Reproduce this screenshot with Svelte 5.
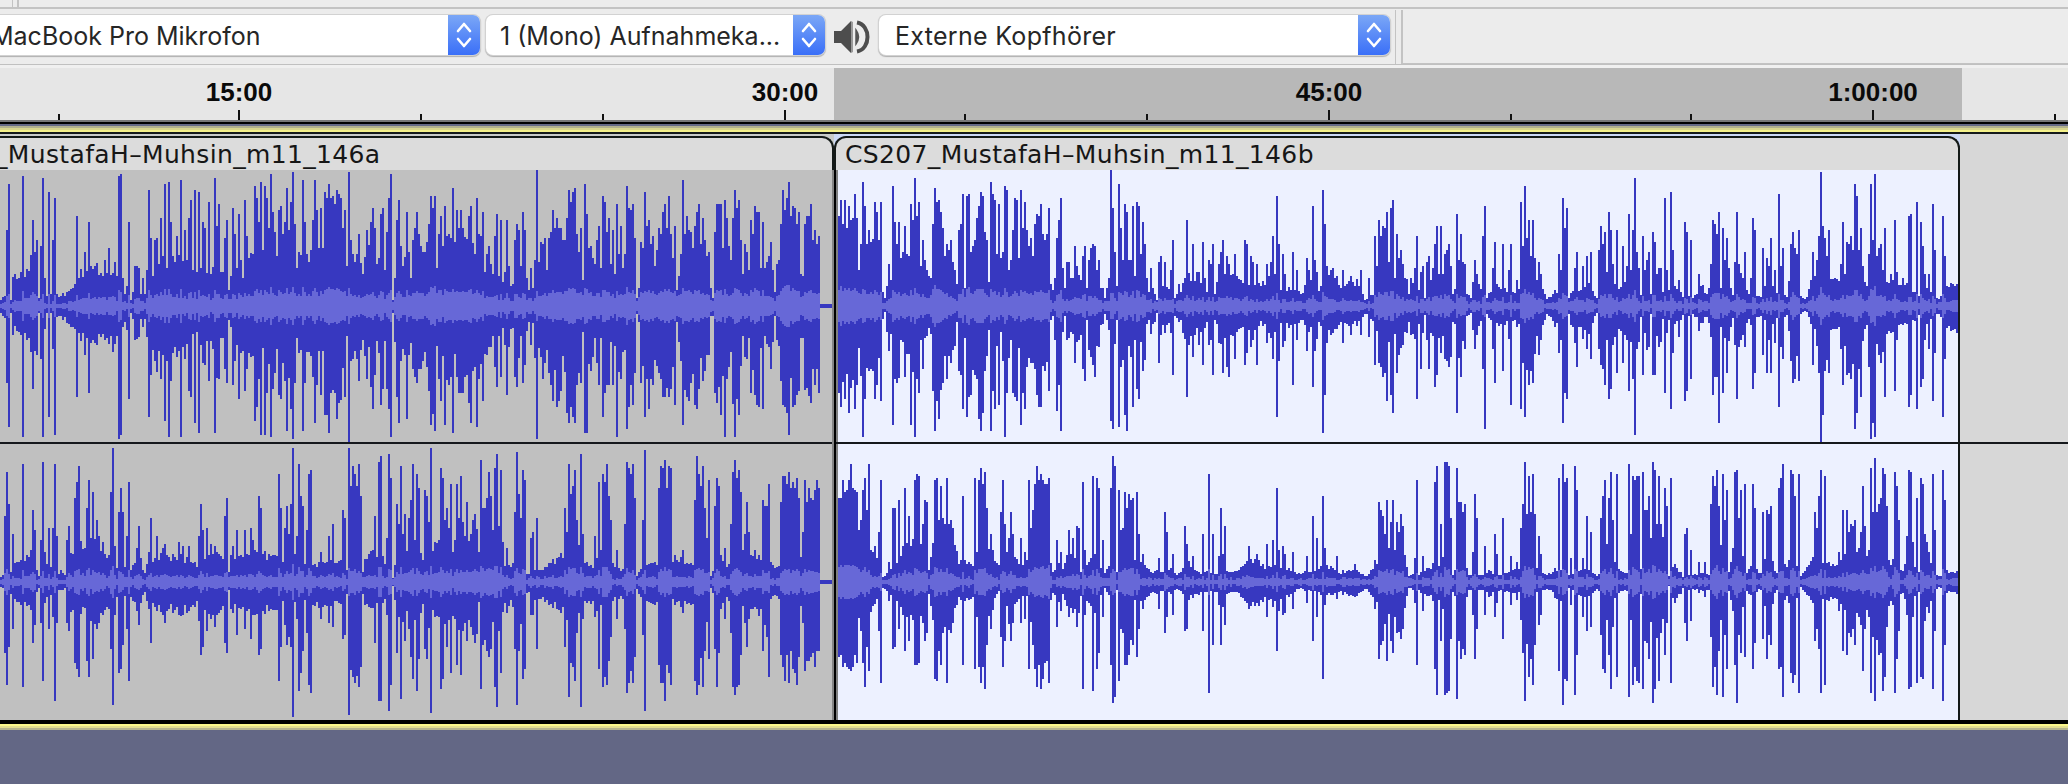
<script>
  // Peak data: each section has an origin in px, units per px, a base envelope
  // and single-column peaks, all written as "x top bottom" triples.
  const upper = [
    { from: 0, to: 420, s: 3,
      base: '0 420 462 12 400 480 30 420 460 45 370 500 60 350 520 90 305 560 110 270 585 120 400 470 145 420 450 170 405 470 195 400 480 215 380 510 240 330 540 290 320 545 345 330 545 375 380 490 395 415 460 415 320 540 425 385 480 440 330 530 470 290 600 540 300 560 600 320 560 660 330 560 760 280 590 880 250 600 960 260 600 1030 200 620 1060 290 590 1180 310 560 1260 240 640',
      peaks: '21 210 670 27 72 802 33 420 458 39 352 526 45 343 497 63 336 526 69 48 832 75 352 520 99 180 688 105 276 574 111 240 586 117 414 460 123 258 598 129 54 832 135 354 508 141 408 458 147 96 772 153 402 458 159 240 568 165 114 826 171 402 470 177 412 468 231 168 712 255 276 586 267 186 700 315 300 540 327 264 552 339 340 575 345 306 552 357 48 838 363 42 826 369 354 502 375 402 485 381 378 510 387 186 718 393 420 458 405 318 540 411 318 536 417 324 532 423 402 478 429 354 502 435 402 478 441 330 532 447 90 772 453 234 646 459 348 570 465 240 604 471 234 635 483 174 658 489 288 584 495 72 784 501 324 604 507 66 832 513 186 664 531 228 592 543 60 832 555 210 598 561 300 552 567 174 694 573 120 712 579 330 522 585 90 790 591 336 516 597 96 820 609 186 610 615 204 616 627 126 664 645 54 820 651 198 654 657 132 658 663 336 534 669 336 534 675 234 628 681 180 670 687 390 480 693 348 502 699 144 676 705 222 604 717 162 718 729 354 572 735 120 694 741 228 628 765 78 784 771 114 742 777 186 658 783 66 826 789 270 564 795 78 826 801 114 700 807 204 612 813 42 832 819 156 688 825 216 640 831 288 568 837 150 706 843 138 718 849 222 610 855 186 664 861 84 814 867 210 654 873 126 748 879 36 838 885 192 670 891 324 534 909 60 814 915 186 670 927 306 576 939 180 652 945 60 790 951 150 676 957 264 574 963 144 706 969 264 574 975 96 766 981 114 766 987 72 820 993 114 700 999 108 690 1005 132 700 1011 90 778 1017 102 730 1023 114 720 1029 204 624 1035 150 712 1041 318 528 1047 36 846 1053 240 604 1077 222 664 1089 342 540 1101 210 658 1107 256 560 1113 186 682 1119 144 748 1125 204 646 1131 312 542 1143 162 736 1149 144 688 1161 216 688 1167 114 748 1173 42 832 1179 420 458 1185 354 545 1191 180 712 1197 120 790 1203 258 604 1209 318 568 1221 156 778 1227 276 586 1233 354 550 1239 240 628 1245 204 652 1251 156 670 1257 222 628' },
    { from: 420, to: 820, s: 3,
      base: '0 260 626 20 250 620 30 200 690 60 240 650 110 235 650 160 260 620 190 300 585 240 345 540 300 330 560 340 330 550 380 260 610 430 240 640 480 250 660 520 270 615 600 290 630 700 260 660 800 250 680 860 280 590 930 270 600 1000 220 680 1060 330 560 1100 160 740 1150 300 600 1200 250 660',
      peaks: '3 258 628 15 276 576 21 246 622 33 108 796 39 144 762 45 108 814 51 324 558 57 222 658 63 168 724 69 258 588 75 138 796 87 222 676 99 84 820 105 246 582 111 150 652 117 204 700 123 150 700 129 204 700 147 168 730 153 138 790 165 282 622 171 114 802 177 222 658 183 228 612 189 156 724 195 336 582 201 282 586 207 258 560 213 312 562 219 342 528 225 228 622 231 162 682 237 348 528 243 180 652 249 366 504 255 336 556 261 180 706 267 318 562 273 378 508 279 372 504 285 240 652 291 192 682 297 210 594 303 318 528 309 156 670 315 210 616 321 354 514 327 390 486 333 324 556 339 384 490 345 300 594 351 30 838 357 306 564 363 246 592 369 252 658 375 234 610 381 330 570 387 234 640 393 216 676 399 150 724 405 204 630 411 174 742 417 204 724 423 204 694 429 240 588 435 240 636 441 174 760 447 90 790 453 126 742 459 96 772 465 84 790 471 222 676 477 276 640 483 204 670 489 360 516 495 72 820 501 162 820 507 264 612 525 312 534 531 240 610 537 198 676 543 324 534 549 108 772 555 126 700 561 216 676 567 174 676 573 312 546 579 210 676 585 342 558 591 132 832 597 282 636 603 198 658 609 324 576 615 282 570 621 78 808 627 144 742 633 150 676 639 132 736 645 234 640 651 414 462 657 384 486 663 246 670 669 264 618 675 96 772 681 198 658 687 180 748 693 252 658 699 228 676 705 318 600 711 270 618 717 204 640 723 222 658 729 156 712 735 132 712 741 204 684 747 108 712 753 222 688 759 294 622 765 198 736 771 390 486 777 348 546 783 282 604 789 60 796 795 222 690 801 168 712 807 210 724 813 216 668 819 264 642 825 198 736 831 156 748 837 132 688 843 252 594 849 174 664 855 240 634 861 288 586 867 276 586 873 384 468 879 414 468 885 216 700 891 132 730 897 132 682 903 132 766 909 264 648 915 120 832 921 174 658 927 258 622 933 300 576 939 174 732 945 90 832 951 144 718 957 120 766 963 240 618 969 342 528 975 252 592 981 276 598 987 330 534 993 180 700 999 222 630 1005 138 706 1011 156 736 1017 156 742 1023 324 564 1029 186 748 1035 324 528 1041 306 552 1047 288 562 1053 246 628 1059 330 546 1065 396 468 1071 312 540 1077 300 558 1083 192 664 1089 90 736 1095 150 742 1101 114 760 1107 66 826 1113 168 654 1119 138 742 1125 144 736 1131 192 706 1137 156 694 1143 342 534 1149 348 534 1155 192 690 1161 168 684 1167 168 708 1173 132 730 1179 240 628 1185 210 676 1191 252 628 1197 228 700' },
    { from: 838, to: 1240, ox: 830, s: 3,
      base: '24 190 700 50 200 690 80 230 670 120 235 635 155 260 620 160 410 458 180 340 530 190 220 650 240 290 580 290 310 540 310 180 690 350 270 600 380 360 530 400 230 660 440 200 680 470 260 640 540 300 600 600 240 610 655 220 640 665 390 470 690 300 620 705 380 500 720 350 520 780 340 560 810 380 500 835 400 480 860 300 580 900 300 600 940 270 600 960 380 490 990 350 520 1030 400 480 1070 345 550 1150 370 510 1200 330 540 1260 345 510',
      peaks: '27 168 700 33 120 742 39 192 666 45 120 718 51 204 642 57 138 760 63 180 684 69 174 660 75 102 748 81 174 676 87 330 564 93 252 648 99 66 832 105 138 718 117 210 634 123 246 628 135 126 718 141 156 676 147 240 594 153 126 724 159 396 478 165 414 456 171 378 516 177 312 574 183 360 522 189 78 796 195 186 658 201 252 670 207 186 654 213 294 540 219 276 546 225 198 652 231 282 582 237 288 582 243 132 796 249 180 636 255 54 832 261 168 658 267 126 700 273 318 540 279 240 628 285 300 534 297 348 504 303 354 522 309 192 694 315 84 814 321 126 724 327 120 778 333 156 690 339 204 670 345 288 588 351 252 658 357 270 588 363 240 610 369 306 570 375 330 558 381 372 486 387 210 634 393 192 646 399 102 748 405 384 534 411 108 772 417 102 712 423 276 706 429 258 630 435 240 646 441 174 658 447 138 778 453 96 814 459 108 760 465 216 634 471 240 588 477 366 510 483 66 814 489 102 694 495 120 748 501 282 558 507 132 736 513 294 516 519 276 604 525 78 832 531 90 700 537 330 594 543 300 540 549 210 700 555 114 712 561 120 724 567 294 564 573 90 796 579 204 700 585 126 748 591 210 622 597 258 594 603 234 610 609 288 610 615 192 628 621 162 706 627 168 742 633 132 742 639 222 618 645 240 634 651 222 606 657 144 694 663 372 480 669 390 468 675 354 540 681 234 754 687 180 676 693 114 814 699 324 516 705 384 468 711 306 540 717 306 534 735 258 610 741 318 546 759 288 628 765 258 664 771 384 480 777 300 570 783 264 592 789 252 616 795 258 652 801 330 558 807 300 560 819 384 492 825 414 462 831 384 480 837 354 510 843 30 784 849 144 808 855 276 552 861 378 480 867 72 802 873 204 622 879 300 600 885 132 766 891 156 814 897 300 558 903 300 592 909 138 742 915 348 540 921 126 688 927 138 718 933 282 546 939 186 634 945 252 600 951 354 492 957 396 480 963 324 522 969 384 492 975 402 486 981 420 458 987 306 610 993 288 526 1005 306 520 1023 330 520 1029 240 646 1035 414 468 1041 402 474 1047 372 486 1053 396 480 1071 180 712 1089 252 592 1101 336 504 1107 336 556 1119 246 616 1125 354 504 1131 396 486 1137 300 556 1143 312 540 1149 252 646 1155 402 480 1161 366 492 1167 312 550 1173 276 552 1179 240 640 1185 342 534 1191 288 622 1197 312 652 1215 282 598 1245 240 616 1251 252 580' },
    { from: 1240, to: 1640, s: 3,
      base: '0 350 510 40 375 520 60 370 490 100 340 530 125 390 490 150 385 500 190 400 480 205 330 520 240 390 490 260 320 530 300 370 500 350 360 495 375 415 465 400 405 480 410 290 600 450 280 590 495 350 520 530 380 520 560 360 510 620 290 590 640 400 480 675 310 560 682 410 460 710 370 500 740 408 465 770 380 500 820 390 490 835 400 480 850 240 630 890 320 560 920 415 465 950 390 500 990 390 510 1050 370 520 1070 415 455 1090 290 600 1130 390 510 1170 330 560 1210 400 500 1260 320 550',
      peaks: '15 240 616 21 252 580 33 288 562 39 306 540 51 312 616 81 312 550 93 306 534 99 228 598 105 342 516 111 108 772 117 252 604 129 282 562 135 342 544 159 276 676 171 330 540 201 294 574 207 330 516 219 138 682 225 300 574 231 336 538 249 90 820 255 192 706 261 318 550 279 324 520 291 348 508 309 330 550 333 348 526 363 330 526 387 354 532 405 228 616 411 318 514 417 180 610 423 228 622 429 198 652 435 204 640 441 156 724 447 306 546 453 144 706 459 120 760 465 354 522 471 222 640 477 294 586 483 270 564 489 312 556 507 402 486 513 354 526 525 324 538 531 228 718 537 390 492 543 336 628 549 318 520 555 414 466 561 306 540 567 288 628 573 360 520 579 324 528 585 252 682 591 198 646 597 342 534 603 198 580 609 342 528 615 282 598 621 270 604 627 252 622 633 318 592 639 402 486 651 162 760 657 300 594 663 222 652 669 306 544 675 312 568 687 404 466 693 414 458 699 366 510 705 300 568 711 342 526 729 228 628 735 138 808 759 324 568 765 246 670 771 372 490 789 252 634 807 330 538 813 252 736 831 360 502 843 126 748 849 258 610 855 78 772 861 234 630 867 180 676 873 288 634 879 180 670 885 294 582 891 360 528 897 306 586 903 342 540 957 282 580 963 330 540 969 114 790 975 204 700 981 144 718 987 414 462 1005 324 550 1011 276 622 1029 318 538 1041 288 568 1053 276 598 1077 270 568 1083 198 616 1089 252 628 1095 216 676 1101 336 540 1107 156 718 1113 210 688 1119 312 556 1131 210 640 1149 258 610 1161 318 540 1167 162 694 1173 330 546 1179 210 658 1185 54 826 1191 276 568 1197 324 546 1203 420 456 1209 228 646 1221 300 568 1227 276 562 1239 216 646 1245 246 646' },
    { from: 1640, to: 1958, s: 3,
      base: '0 420 456 10 350 520 30 400 480 45 320 550 65 390 480 105 380 490 125 402 475 160 412 465 185 375 490 205 408 465 215 290 590 250 340 560 270 370 520 280 410 470 300 340 540 325 400 480 360 410 470 380 370 500 410 390 480 440 410 465 460 290 590 480 410 460 500 415 455 510 360 490 540 260 600 580 365 500 600 340 520 640 280 600 680 370 500 700 260 660 740 350 540 760 355 520 800 370 490 820 400 480 845 345 540 870 390 480 895 420 460 930 360 520 960 380 515',
      peaks: '9 228 646 15 330 520 21 300 570 27 276 562 33 402 462 39 216 646 45 246 646 51 342 528 57 324 562 63 324 546 75 114 700 81 330 520 93 96 748 99 270 580 117 360 532 135 186 724 141 216 694 153 240 658 177 342 514 213 312 532 219 180 706 225 192 652 231 222 652 237 156 790 243 384 502 249 204 700 255 300 534 261 234 640 267 324 544 285 306 556 291 156 718 297 312 562 315 276 562 333 354 496 339 174 688 345 210 640 369 264 586 375 378 480 381 294 640 387 318 540 393 234 640 405 330 550 417 102 742 423 318 562 429 264 598 453 252 604 459 216 670 465 264 658 471 282 588 477 210 664 519 276 616 525 348 506 537 228 640 543 36 846 549 198 766 555 234 634 561 288 600 567 210 640 603 312 568 609 186 676 615 342 558 621 246 646 627 252 640 633 228 658 639 270 612 645 72 808 651 108 760 657 270 628 663 204 712 669 318 544 687 282 622 693 72 838 699 240 790 705 42 832 711 288 552 717 264 586 723 252 610 729 330 576 735 204 712 753 342 520 765 180 694 771 336 540 789 354 496 807 168 742 813 162 706 819 396 480 831 126 748 837 408 466 843 186 682 849 258 658 855 342 540 867 342 568 879 132 724 885 270 580 909 168 772 915 288 598' }
  ];

  const lower = [
    { from: 0, to: 510, s: 3,
      base: '0 408 442 12 395 450 40 375 470 60 365 490 90 330 510 115 407 443 135 360 480 170 390 460 178 400 450 196 398 450 205 335 530 250 300 520 290 300 550 320 345 510 340 350 500 370 365 480 395 385 475 415 350 500 432 400 455 450 350 505 500 345 510 550 350 520 590 375 490 640 345 520 700 350 500 760 340 515 820 340 515 850 340 520 880 300 560 920 370 500 960 370 500 1020 360 490 1040 385 470 1085 370 490 1120 335 500 1180 380 480 1210 300 540 1260 330 530 1320 300 530 1400 300 540 1440 250 600 1500 280 570 1515 370 500 1540 390 480',
      peaks: '15 228 640 21 96 736 27 192 622 33 396 462 39 282 568 69 72 742 99 210 610 105 270 556 117 408 444 123 300 550 129 66 724 135 336 490 147 264 568 159 264 532 165 72 784 171 288 550 177 402 450 183 390 450 201 300 550 207 258 574 225 174 670 231 126 688 237 78 712 261 204 664 267 120 712 279 156 658 291 240 568 297 288 550 309 306 526 333 156 628 339 24 796 345 318 526 351 384 470 357 216 700 363 144 688 369 216 616 381 288 568 387 126 724 393 390 470 411 324 514 417 258 556 423 354 490 447 336 508 453 234 610 471 288 514 489 324 526 495 312 550 537 306 526 549 318 526 567 318 514 597 288 544 603 192 646 609 270 622 621 264 574 633 312 538 645 318 562 675 228 610 681 174 640 687 396 450 699 318 520 711 270 586 735 270 568 753 264 598 759 300 526 777 168 646 783 204 628 837 102 724 843 204 622 849 366 484 855 264 556 861 198 616 867 282 592 873 192 622 879 24 832 885 342 486 891 288 538 897 72 754 903 168 700 909 198 634 915 372 480 921 270 580 927 102 736 933 90 760 963 336 538 987 288 550 999 252 562 1029 210 598 1035 234 586 1041 390 462 1047 24 826 1053 138 690 1059 78 712 1065 102 730 1071 138 708 1077 72 742 1083 168 682 1089 396 462 1125 228 610 1137 66 784 1143 48 784 1149 348 488 1161 294 526 1167 42 814 1173 114 736 1179 414 438 1191 192 640 1197 252 532 1203 78 778 1209 282 546 1215 222 604 1227 234 568 1233 180 652 1239 72 718 1245 300 540 1251 102 754 1257 144 658 1269 360 492 1275 150 628 1281 168 658 1287 246 564 1293 24 820 1323 84 748 1329 114 718 1335 240 552 1341 204 622 1347 264 540 1353 132 700 1359 336 528 1371 132 676 1377 234 570 1383 108 706 1389 246 574 1401 186 604 1419 240 586 1425 222 610 1437 336 486 1443 60 748 1449 204 616 1455 204 600 1461 174 634 1467 96 652 1473 168 628 1479 270 546 1485 84 742 1491 42 802 1497 258 574 1503 90 700 1509 306 516 1521 324 520 1533 318 526 1545 216 628 1551 36 796' },
    { from: 510, to: 1020, s: 3,
      base: '0 395 460 14 350 530 50 400 460 75 390 480 105 380 485 145 350 510 162 345 510 170 280 540 210 290 540 222 355 495 235 378 480 255 375 500 270 330 520 280 280 600 305 370 480 340 385 480 378 405 450 400 370 490 440 370 490 490 350 490 550 370 500 590 350 530 603 408 445 625 340 510 655 375 480 700 330 500 750 345 530 785 370 470 808 375 480 870 330 520 930 350 500 984 170 650 1040 200 650 1080 330 510 1103 350 480 1115 410 445 1140 390 460 1160 360 490 1190 300 540 1240 310 530 1255 400 450 1270 300 550 1330 290 520 1345 360 480 1390 370 480 1410 300 580 1450 340 500 1465 375 450 1500 300 530 1530 370 480 1560 370 480',
      peaks: '15 216 628 21 36 796 27 162 634 33 234 552 39 90 718 45 120 688 63 294 526 69 276 526 81 234 628 165 204 622 171 276 540 177 72 772 183 162 670 189 138 682 195 90 724 201 240 580 213 42 802 219 282 538 255 288 532 267 126 688 273 330 496 279 102 742 285 126 712 291 72 736 297 168 664 303 240 592 321 330 538 345 252 568 351 66 760 357 84 730 363 102 694 369 72 730 375 174 652 381 408 446 399 240 586 405 30 814 447 144 676 453 78 730 459 84 730 465 60 784 471 144 676 477 78 700 483 84 736 519 330 520 555 180 724 561 48 766 567 102 736 573 138 654 579 78 742 585 204 634 591 294 546 597 120 658 603 408 444 615 198 628 621 114 742 627 138 640 645 324 538 663 252 580 669 96 742 675 60 766 681 114 742 687 90 736 693 156 646 705 282 550 711 186 622 717 276 538 735 330 502 759 180 634 765 198 556 771 198 592 777 132 712 813 186 646 819 108 682 825 108 724 831 132 646 837 96 730 843 144 634 849 126 688 855 144 700 861 114 736 867 174 652 879 276 550 885 120 694 891 186 664 897 144 664 903 174 652 909 180 640 915 150 682 921 120 634 927 144 634 987 174 652 993 174 646 999 120 682 1005 156 670 1011 150 682 1017 120 688 1023 72 694 1029 144 682 1035 150 646 1041 156 670 1047 270 534 1053 240 574 1059 150 670 1065 114 742 1071 210 622 1077 72 694 1083 330 516 1095 318 492 1107 276 574 1113 120 730 1137 366 484 1149 204 628 1155 204 622 1167 180 568 1185 144 634 1197 228 604 1215 120 676 1221 102 676 1227 108 670 1239 252 550 1245 180 604 1251 186 580 1275 120 718 1281 114 724 1287 240 634 1293 138 676 1299 234 580 1305 252 562 1311 114 730 1317 252 570 1323 240 580 1329 264 550 1359 168 676 1395 114 688 1407 120 682 1413 84 730 1419 132 682 1425 96 748 1431 204 616 1443 282 568 1473 216 592 1479 120 682 1485 252 604 1497 294 552 1503 216 604 1509 282 550 1533 294 550 1545 342 538 1557 120 688' },
    { from: 1020, to: 1530, s: 3,
      base: '0 380 470 20 370 460 30 250 560 88 250 600 95 405 445 110 370 490 130 380 470 150 330 510 170 370 500 185 395 470 210 345 510 240 370 480 250 408 435 270 370 470 290 380 470 310 265 580 340 200 600 355 350 500 385 390 465 420 390 460 450 385 460 475 402 450 500 360 480 540 400 460 560 390 460 590 400 460 650 390 460 690 345 510 740 380 480 790 380 480 840 402 445 880 385 460 920 375 465 960 395 460 1000 388 470 1040 405 450 1070 378 480 1090 260 580 1150 310 540 1165 405 445 1210 395 460 1240 370 480 1270 340 520 1300 408 450 1330 300 560 1345 405 450 1375 408 446 1410 390 470 1440 405 450 1480 385 465 1500 380 460 1520 230 580 1560 340 500',
      peaks: '3 294 550 15 336 538 27 120 688 33 264 546 39 210 616 45 132 688 51 78 742 57 120 676 63 102 748 69 120 718 75 132 670 81 132 664 87 114 730 111 300 562 123 336 514 147 270 532 159 294 520 171 258 562 177 264 520 189 126 748 195 330 526 219 108 754 225 342 520 231 114 688 237 144 640 249 300 532 273 144 676 279 48 790 285 78 772 291 396 450 297 150 724 303 270 568 309 264 580 315 156 676 321 204 676 327 162 646 333 180 600 339 174 616 345 360 480 351 156 652 357 282 568 369 342 508 417 354 508 435 216 580 441 276 532 459 342 526 495 258 574 501 312 568 519 348 474 549 282 574 567 102 760 579 282 616 597 348 496 603 204 616 609 342 500 615 258 556 687 318 508 711 342 490 741 312 532 759 300 502 771 144 634 777 330 514 789 318 526 795 342 520 819 336 508 861 348 490 879 228 604 891 294 532 909 168 718 915 324 496 951 348 478 1005 372 472 1065 360 508 1077 186 658 1083 210 616 1089 228 604 1095 282 552 1101 180 664 1107 324 522 1113 246 604 1119 180 640 1125 330 532 1131 246 580 1137 276 576 1143 222 598 1149 258 568 1187 354 490 1191 120 676 1209 348 514 1245 126 688 1251 78 766 1257 378 480 1263 252 604 1275 66 766 1281 66 760 1287 78 754 1293 234 598 1311 84 778 1317 186 604 1323 186 658 1329 216 628 1335 192 646 1359 336 526 1365 162 658 1371 234 568 1395 318 526 1425 282 532 1431 342 490 1449 234 598 1473 348 496 1491 366 480 1503 264 540 1509 192 640 1515 66 784 1521 222 612 1527 108 712 1533 216 658 1539 102 736 1545 222 616 1557 288 556' },
    { from: 1530, to: 1958, s: 2.9145,
      base: '0 250 620 15 378 460 45 402 450 70 390 460 82 385 500 110 408 440 150 380 480 200 405 450 215 300 560 245 370 470 285 402 450 300 290 560 320 400 450 345 260 580 385 250 570 405 405 440 420 370 490 445 405 450 500 400 450 525 405 450 545 260 600 580 400 450 600 270 560 630 405 450 650 360 480 670 407 440 695 300 560 715 400 450 770 350 500 790 410 440 820 350 490 870 370 480 890 380 470 920 320 530 990 330 530 1040 280 580 1050 380 480 1070 310 530 1085 405 450 1105 310 530 1130 400 450 1160 340 510 1180 400 450 1195 410 440 1210 390 460 1250 395 460',
      peaks: '3 216 658 9 102 736 14 222 616 26 288 556 32 342 526 85 114 694 96 72 796 102 126 718 108 114 724 120 354 496 131 78 766 137 150 646 155 354 532 166 228 574 178 276 562 207 234 586 213 168 688 219 120 700 231 174 646 236 96 748 242 240 562 254 102 712 289 72 772 295 282 540 300 108 736 306 120 682 312 108 724 318 108 730 329 96 748 335 210 604 341 210 610 347 168 658 359 66 790 364 90 748 370 252 594 376 108 724 382 252 580 394 144 646 399 198 550 411 114 730 452 282 550 458 264 604 469 330 544 492 366 458 510 366 472 528 192 592 534 108 742 539 138 682 545 90 766 551 198 634 563 102 772 568 240 586 574 150 688 598 96 676 603 90 790 609 234 586 615 150 640 622 348 500 627 132 652 650 132 688 656 204 610 679 216 598 691 210 658 697 222 586 702 198 616 726 144 688 732 114 682 738 72 772 761 90 700 767 102 730 773 168 706 784 102 760 831 216 604 837 264 568 842 168 628 848 90 760 860 108 736 900 336 514 912 210 634 924 210 646 930 276 580 936 252 592 942 258 568 947 240 616 965 276 556 970 138 694 976 258 568 994 84 760 1000 216 592 1006 54 784 1012 216 600 1018 192 646 1023 174 640 1029 84 754 1035 102 712 1041 198 562 1064 96 760 1070 138 658 1076 240 574 1099 288 526 1105 90 748 1110 96 742 1117 306 532 1128 174 730 1140 114 712 1145 132 718 1151 282 544 1157 306 500 1163 336 520 1175 102 748 1181 270 574 1204 90 784 1209 180 616' }
  ];

  const triples = (str) => {
    const n = str.split(' ').map(Number);
    const out = [];
    for (let i = 0; i + 2 < n.length; i += 3) out.push([n[i], n[i + 1], n[i + 2]]);
    return out;
  };
  const noise = (i) => {
    const v = Math.sin(i * 12.9898) * 43758.5453;
    return v - Math.floor(v) - 0.5;
  };

  function build(sections, zero, cy) {
    const cols = [];
    for (const sec of sections) {
      const ox = sec.ox ?? sec.from;
      const base = triples(sec.base);
      const peaks = new Map(triples(sec.peaks).map(([x, t, b]) => [Math.round((ox + x / sec.s - 1) / 2), [t, b]]));
      let k = 0;
      for (let x = sec.from; x < sec.to; x += 2) {
        const u = (x + 1 - ox) * sec.s;
        while (k < base.length - 2 && base[k + 1][0] <= u) k++;
        const [x0, t0, b0] = base[k];
        const [x1, t1, b1] = base[k + 1];
        const f = Math.max(0, Math.min(1, (u - x0) / (x1 - x0)));
        const up = zero - (t0 + (t1 - t0) * f);
        const dn = b0 + (b1 - b0) * f - zero;
        const p = peaks.get(x / 2);
        const j = 0.94 + noise(x) * 0.34;
        const U = p ? zero - p[0] : up * j;
        const D = p ? p[1] - zero : dn * j;
        const r = Math.min(3 + (up + dn) * 0.05 + (U + D) * 0.042 + noise(x + 7) * 10, Math.min(U, D) * 0.65);
        cols.push([x, U / 3, D / 3, Math.max(r, 6) / 3]);
      }
    }
    const path = (a, b, up, dn) =>
      cols.filter((c) => c[0] >= a && c[0] < b)
        .map((c) => {
          const t = Math.round(cy - up(c));
          const e = Math.round(cy + dn(c));
          return `M${c[0]} ${t}h2V${e}h-2z`;
        }).join('');
    return (a, b) => ({
      peak: path(a, b, (c) => c[1], (c) => c[2]),
      rms: path(a, b, (c) => c[3], (c) => c[3])
    });
  }
  const waveU = build(upper, 438, 306);
  const waveL = build(lower, 426, 582);

  const clips = [
    { id: 'a', title: '_MustafaH–Muhsin_m11_146a', x: 0, w: 832, u: waveU(0, 820), l: waveL(0, 820), tail: true },
    { id: 'b', title: 'CS207_MustafaH–Muhsin_m11_146b', x: 838, w: 1120, u: waveU(838, 1958), l: waveL(838, 1958), tail: false }
  ];
  const ticks = [
    [59, ''], [239, '15:00'], [421, ''], [603, ''], [785, '30:00'], [965, ''], [1147, ''],
    [1329, '45:00'], [1511, ''], [1691, ''], [1873, '1:00:00'], [2055, '']
  ];
</script>

{#snippet arrows()}
  <span class="arrows">
    <svg width="32" height="40" viewBox="0 0 32 40">
      <path d="M10 16l6-7 6 7M10 24l6 7 6-7" fill="none" stroke="#fff" stroke-width="2.6" stroke-linecap="round" stroke-linejoin="round" />
    </svg>
  </span>
{/snippet}

<main>
  <div class="strip"><i></i><b></b></div>
  <div class="toolbar">
    <div class="select mic"><span>MacBook Pro Mikrofon</span>{@render arrows()}</div>
    <div class="select chan"><span>1 (Mono) Aufnahmeka...</span>{@render arrows()}</div>
    <svg class="speaker" width="38" height="36" viewBox="0 0 38 36">
      <path d="M1 12h7L18 2v32L8 24H1z" fill="#4d4d4d" />
      <path d="M18 2l2 1v30l-2 1z" fill="#999" />
      <path d="M23 11q5 7 0 14z" fill="#555" stroke="#555" stroke-width="1.5" />
      <path d="M24 3.5C38 6 38 30 24 32.500" fill="none" stroke="#4d4d4d" stroke-width="4" />
    </svg>
    <div class="select out"><span>Externe Kopfhörer</span>{@render arrows()}</div>
    <div class="grip"></div>
    <div class="empty"></div>
  </div>
  <div class="ruler">
    <div class="sel"></div>
    {#each ticks as [x, label]}
      <div class="tick" class:major={label} style="left:{x}px">
        {#if label}<span>{label}</span>{/if}
      </div>
    {/each}
  </div>
  <div class="edge top"></div>
  <div class="track">
    {#each clips as c}
      <section class="clip {c.id}">
        <div class="gap"><header>{c.title}</header></div>
        <div class="body">
          <svg width={c.w} height="272" viewBox="{c.x} 170 {c.w} 272" shape-rendering="crispEdges">
            <path d={c.u.peak} fill="#3738c0" />
            <path d={c.u.rms} fill="#6768d7" />
            {#if c.tail}<rect x="820" y="304" width="12" height="4" fill="#3738c0" />{/if}
          </svg>
          <hr />
          <svg width={c.w} height="276" viewBox="{c.x} 444 {c.w} 276" shape-rendering="crispEdges">
            <path d={c.l.peak} fill="#3738c0" />
            <path d={c.l.rms} fill="#6768d7" />
            {#if c.tail}<rect x="820" y="580" width="12" height="4" fill="#3738c0" />{/if}
          </svg>
        </div>
      </section>
    {/each}
    <div class="rest"><hr /></div>
  </div>
  <div class="edge bottom"></div>
</main>

<style>
  :global(body) { margin: 0; }
  main {
    width: 2068px;
    height: 784px;
    overflow: hidden;
    background: #636785;
    display: flex;
    flex-direction: column;
  }
  main > div { flex: none; box-sizing: border-box; }
  .strip {
    height: 9px;
    background: #ececec;
    border-bottom: 2px solid #c3c3c3;
    display: flex;
  }
  .strip i { width: 1px; margin-left: 12px; background: #c3c3c3; }
  .strip b { width: 2px; margin-left: 4px; background: #c3c3c3; }
  .toolbar {
    height: 59px;
    background: #ececec;
    display: flex;
    align-items: flex-start;
    box-shadow: inset 0 -3px #f0f0f0, inset 0 -4px #c0c0c0;
  }
  .select {
    box-sizing: border-box;
    height: 40px;
    margin-top: 6px;
    background: #fff;
    border-radius: 7px;
    box-shadow: 0 0 0 1px #d2d2d2, 0 1px 1px 1px #b0b0b0;
    display: flex;
    justify-content: space-between;
    overflow: hidden;
    font: 25px/43px Inter, sans-serif;
    color: #262626;
    white-space: nowrap;
  }
  .mic { width: 480px; border-radius: 0 7px 7px 0; }
  .mic span:first-child { margin-left: -9px; }
  .chan { width: 339px; margin-left: 6px; }
  .chan span:first-child { margin-left: 14px; }
  .out { width: 511px; margin-left: 8px; }
  .out span:first-child { margin-left: 16px; letter-spacing: 0.3px; }
  .arrows {
    width: 32px;
    height: 40px;
    background: linear-gradient(#7ba7f6, #3a6ff8);
    display: flex;
  }
  .speaker { margin: 10px 0 0 8px; flex: none; }
  .grip {
    width: 8px;
    height: 54px;
    margin-left: 5px;
    margin-top: 1px;
    box-sizing: border-box;
    border-left: 1px solid #c3c3c3;
    border-right: 2px solid #c3c3c3;
  }
  .empty { flex: 1; height: 55px; box-sizing: border-box; border-bottom: 1px solid #c3c3c3; }
  .ruler { position: relative; height: 52px; background: #e6e6e6; }
  .sel { height: 100%; margin-left: 834px; width: 1128px; background: #b8b8b8; }
  .tick {
    position: absolute;
    bottom: 0;
    width: 2px;
    height: 6px;
    margin-left: -1px;
    background: #111;
    display: flex;
    justify-content: center;
  }
  .tick.major { height: 10px; }
  .tick span {
    position: absolute;
    bottom: 13px;
    font: bold 26px/30px 'Liberation Sans', sans-serif;
    color: #0a0a0a;
  }
  .edge.top {
    height: 14px;
    background: linear-gradient(#777 0 2px, #000 2px 4px, #656985 4px 6px, #b2b18e 6px 8px, #d8d58c 8px 10px, #f5f28a 10px 12px, #151a1a 12px);
  }
  .edge.bottom {
    height: 10px;
    background: linear-gradient(#000 0 4px, #fbf78b 4px 6px, #e2de8e 6px 8px, #b6b48d 8px 10px);
  }
  .track { height: 586px; display: flex; }
  .clip { display: flex; flex-direction: column; flex: none; }
  .a { width: 834px; background: #c0c0c0; }
  .b { width: 1126px; background: #edf1ff; }
  .gap { height: 36px; padding-top: 2px; box-sizing: border-box; }
  .a .gap { background: #c9ccc9; }
  .b .gap { background: #ccdaf6; }
  header {
    box-sizing: border-box;
    height: 34px;
    background: #dcdcdc;
    border: 2px solid #141a18;
    border-bottom: 0;
    border-radius: 12px 12px 0 0;
    font: 25px/34px 'DejaVu Sans', sans-serif;
    letter-spacing: 0.35px;
    color: #161616;
    white-space: nowrap;
    overflow: hidden;
  }
  .a header { border-left: 0; border-radius: 0 12px 0 0; text-indent: -5px; }
  .b header { text-indent: 9px; }
  .body { display: flex; flex-direction: column; flex: 1; }
  .a .body { border-right: 2px solid #858585; }
  .b .body { border-left: 2px solid #000; border-right: 2px solid #141818; box-shadow: inset 2px 0 #808080; }
  .b .body svg { margin-left: 2px; }
  svg { display: block; }
  hr { margin: 0; border: 0; height: 2px; background: #15181c; flex: none; }
  .rest { flex: 1; background: #d7d7d7; padding-top: 308px; }
</style>
